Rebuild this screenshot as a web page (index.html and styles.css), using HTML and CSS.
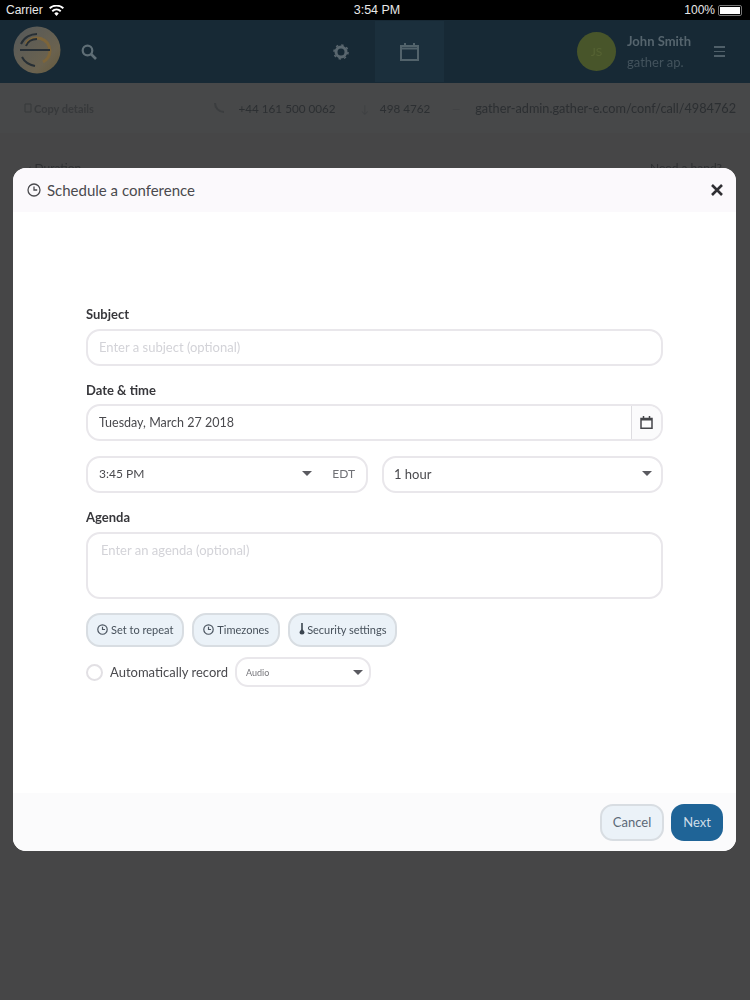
FILE: index.html
```html
<!DOCTYPE html>
<html>
<head>
	<title>Schedule a conference</title>
	<link rel="stylesheet" href="styles.css">
</head>
<body>
	<div class="status-bar">
		<div class="status-left">
			<span>Carrier</span>
			<svg width="15" height="11" viewBox="0 0 15 11"><path fill="#fff" d="M7.5 11 5.3 8.4a3.2 3.2 0 0 1 4.4 0zM3.9 6.9 2.6 5.4a7.4 7.4 0 0 1 9.8 0l-1.3 1.5a5.4 5.400 0 0 0-7.200 0zM1.300 3.900 0 2.500a11.400 11.400 0 0 1 15 0l-1.300 1.400a9.400 9.400 0 0 0-12.400 0z"/></svg>
		</div>
		<div class="status-time">3:54 PM</div>
		<div class="status-right">
			<span>100%</span>
			<div class="battery"><div class="battery-fill"></div></div>
		</div>
	</div>

	<div class="app-header">
		<div class="logo">
			<svg width="48" height="48" viewBox="0 0 48 48">
				<defs>
					<linearGradient id="disc" x1="0" y1="0" x2="1" y2="1">
						<stop offset="0" stop-color="#54585a"/>
						<stop offset="0.7" stop-color="#6a624f"/>
						<stop offset="1" stop-color="#64583a"/>
					</linearGradient>
				</defs>
				<circle cx="24" cy="24" r="23.500" fill="url(#disc)"/>
				<path fill="none" stroke="#7d653a" stroke-width="3" d="M37 25a13 13 0 0 0-24-7M37 25a13 13 0 0 1-7 11"/>
				<path fill="none" stroke="#272f35" stroke-width="2" d="M7 24h30M8 18c3-7 10-10 16-10M9 31c3 6 8 8 13 9M13 20c2-5 6-7 11-7"/>
			</svg>
		</div>
		<svg class="search-icon" width="16" height="16" viewBox="0 0 16 16"><circle cx="6.500" cy="6.500" r="4.800" fill="none" stroke="#5f6e76" stroke-width="2.200"/><path stroke="#5f6e76" stroke-width="2.600" d="m10 10 5 5"/></svg>
		<div class="header-spacer"></div>
		<svg class="gear-icon" width="16" height="16" viewBox="0 0 16 16"><circle cx="8" cy="8" r="5" fill="none" stroke="#59666e" stroke-width="3"/><circle cx="8" cy="8" r="7" fill="none" stroke="#59666e" stroke-width="1.600" stroke-dasharray="2.400 3.100"/></svg>
		<div class="calendar-tab">
			<svg width="19" height="18" viewBox="0 0 19 18"><path fill="none" stroke="#52636b" stroke-width="2" d="M1 3h17v14H1zM1 5.500h17"/><path stroke="#52636b" stroke-width="2" d="M5 0v3M14 0v3"/></svg>
		</div>
		<div class="avatar">JS</div>
		<div class="user">
			<div class="user-name">John Smith</div>
			<div class="user-org">gather ap.</div>
		</div>
		<div class="menu-icon"><span></span><span></span><span></span></div>
	</div>

	<div class="sub-bar">
		<div class="copy-details">
			<svg width="8" height="10" viewBox="0 0 8 10"><path fill="none" stroke="#37393b" d="M1 1h6v8H1z"/></svg>
			<span>Copy details</span>
		</div>
		<div class="sub-spacer"></div>
		<svg width="12" height="12" viewBox="0 0 12 12"><path fill="none" stroke="#3b3d3f" stroke-width="2" d="M2 1c0 5 4 9 9 9"/></svg>
		<span class="sub-phone">+44 161 500 0062</span>
		<span class="sub-hash">↓</span>
		<span class="sub-pin">498 4762</span>
		<span class="sub-dash">—</span>
		<span class="sub-url">gather-admin.gather-e.com/conf/call/4984762</span>
	</div>

	<div class="page-row">
		<span>‹ Duration</span>
		<span>Need a hand?</span>
	</div>

	<div class="modal">
		<div class="modal-header">
			<div class="modal-title">
				<svg class="clock" width="14" height="14" viewBox="0 0 14 14"><circle cx="7" cy="7" r="6" fill="none" stroke="#4b4b4f" stroke-width="1.300"/><path fill="none" stroke="#4b4b4f" stroke-width="1.300" d="M7 3.600V7h3.200"/></svg>
				<span>Schedule a conference</span>
			</div>
			<svg class="close" width="12" height="12" viewBox="0 0 12 12"><path stroke="#2f2f33" stroke-width="2.600" d="m1 1 10 10M11 1 1 11"/></svg>
		</div>

		<div class="modal-body">
			<div class="label">Subject</div>
			<div class="field field-subject placeholder">Enter a subject (optional)</div>

			<div class="label label-date">Date &amp; time</div>
			<div class="date-group">
				<div class="date-value">Tuesday, March 27 2018</div>
				<div class="date-button">
					<svg width="13" height="13" viewBox="0 0 13 13"><path fill="none" stroke="#45464a" stroke-width="1.500" d="M1 2.500h11v9.700H1z"/><path stroke="#45464a" stroke-width="2" d="M1 3.500h11"/><path stroke="#45464a" stroke-width="1.500" d="M3.500 0v2.500M9.500 0v2.500"/></svg>
				</div>
			</div>

			<div class="time-row">
				<div class="field select-time">
					<span class="grow">3:45 PM</span>
					<span class="caret"></span>
					<span class="zone">EDT</span>
				</div>
				<div class="field select-duration">
					<span class="grow">1 hour</span>
					<span class="caret"></span>
				</div>
			</div>

			<div class="label">Agenda</div>
			<div class="field-agenda placeholder">Enter an agenda (optional)</div>

			<div class="options">
				<div class="pill">
					<svg width="11" height="11" viewBox="0 0 14 14"><circle cx="7" cy="7" r="6" fill="none" stroke="#4b5560" stroke-width="1.500"/><path fill="none" stroke="#4b5560" stroke-width="1.500" d="M7 3.600V7h3.200"/></svg>
					<span>Set to repeat</span>
				</div>
				<div class="pill">
					<svg width="11" height="11" viewBox="0 0 14 14"><circle cx="7" cy="7" r="6" fill="none" stroke="#4b5560" stroke-width="1.500"/><path fill="none" stroke="#4b5560" stroke-width="1.500" d="M7 3.600V7h3.200"/></svg>
					<span>Timezones</span>
				</div>
				<div class="pill pill-security">
					<svg width="6" height="12" viewBox="0 0 6 12"><path fill="#3c4650" d="M2.200 0h1.600v6.500L5.500 9a2.500 2.500 0 1 1-5 0l1.700-2.500z"/></svg>
					<span>Security settings</span>
				</div>
			</div>

			<div class="record-row">
				<span class="radio"></span>
				<span class="record-label">Automatically record</span>
				<div class="record-select">
					<span class="grow">Audio</span>
					<span class="caret"></span>
				</div>
			</div>
		</div>

		<div class="modal-footer">
			<div class="btn btn-cancel">Cancel</div>
			<div class="btn btn-next">Next</div>
		</div>
	</div>
</body>
</html>
```

FILE: styles.css
```css
* {
	box-sizing: border-box;
}

body {
	margin: 0;
	height: 1000px;
	overflow: hidden;
	background-color: #464647;
	font-family: Lato, "Noto Sans", sans-serif;
	color: #4a4a4e;
}

.status-bar {
	display: flex;
	align-items: center;
	height: 20px;
	padding: 0 6px;
	background-color: #000;
	color: #e8e8e8;
	font-family: "Liberation Sans", Arial, sans-serif;
	font-size: 12px;
}

.status-left {
	display: flex;
	align-items: center;
	gap: 6px;
	width: 308px;
}

.status-time {
	width: 126px;
	text-align: center;
	font-size: 12.500px;
}

.status-right {
	display: flex;
	justify-content: flex-end;
	align-items: center;
	gap: 3px;
	flex: 1;
	padding-right: 2px;
}

.battery {
	width: 24px;
	height: 11px;
	padding: 1px;
	border: 1px solid #777;
	border-radius: 2px;
}

.battery-fill {
	height: 100%;
	background-color: #fff;
}

.app-header {
	display: flex;
	align-items: center;
	height: 63px;
	padding-left: 13px;
	background-color: #172935;
	filter: blur(0.6px);
}

.search-icon {
	margin-left: 20px;
}

.header-spacer {
	flex: 1;
}

.gear-icon {
	margin-right: 26px;
}

.calendar-tab {
	display: flex;
	align-items: center;
	justify-content: center;
	width: 69px;
	height: 61px;
	margin-right: 133px;
	background-color: #1b2f3c;
}

.avatar {
	display: flex;
	align-items: center;
	justify-content: center;
	width: 39px;
	height: 39px;
	border-radius: 50%;
	background-color: #48552a;
	color: #566333;
	font-size: 12px;
}

.user {
	margin-left: 11px;
	width: 87px;
}

.user-name {
	color: #56656e;
	font-size: 13px;
	font-weight: bold;
	line-height: 21px;
}

.user-org {
	color: #43535d;
	font-size: 13px;
	line-height: 21px;
}

.menu-icon {
	display: flex;
	flex-direction: column;
	gap: 3px;
	width: 11px;
	margin-right: 25px;
}

.menu-icon span {
	height: 1.500px;
	background-color: #4f5f69;
}

.sub-bar {
	display: flex;
	align-items: center;
	height: 50px;
	padding: 0 14px 0 24px;
	background-color: #474849;
	color: #2c2f32;
	font-size: 12px;
	filter: blur(0.7px);
}

.copy-details {
	display: flex;
	align-items: center;
	gap: 2px;
	font-size: 11px;
	font-weight: bold;
	color: #37393b;
}

.sub-spacer {
	flex: 1;
}

.sub-phone {
	margin-left: 13px;
	font-size: 11.700px;
}

.sub-hash {
	margin-left: 25px;
	font-size: 11px;
	color: #3f4143;
}

.sub-pin {
	margin-left: 11px;
	font-size: 11.700px;
}

.sub-dash {
	margin: 0 15px 0 22px;
	color: #3f4042;
	font-size: 10px;
}

.sub-url {
	font-size: 12.700px;
}

.page-row {
	display: flex;
	justify-content: space-between;
	padding: 27px 28px 0;
	color: #2e3032;
	font-size: 12px;
	filter: blur(0.7px);
}

.modal {
	position: absolute;
	left: 13px;
	top: 168px;
	display: flex;
	flex-direction: column;
	width: 723px;
	height: 683px;
	border-radius: 13px;
	overflow: hidden;
	background-color: #fff;
}

.modal-header {
	display: flex;
	align-items: center;
	justify-content: space-between;
	height: 44px;
	padding: 0 13px 0 14px;
	background-color: #fbf9fc;
}

.modal-title {
	display: flex;
	align-items: center;
	gap: 6px;
	font-size: 15px;
}

.modal-body {
	flex: 1;
	padding: 94px 73px 0;
	filter: blur(0.3px);
}

.label {
	height: 23px;
	color: #37373b;
	font-size: 13px;
	font-weight: bold;
	line-height: 16px;
}

.label-date {
	height: 22px;
}

.field {
	display: flex;
	align-items: center;
	height: 37px;
	padding: 0 11px 2px;
	border: 2px solid #e9e7eb;
	border-radius: 14px;
	background-color: #fff;
	font-size: 13px;
}

.field-subject {
	margin-bottom: 16px;
}

.placeholder {
	color: #d3d3d8;
}

.date-group {
	display: flex;
	height: 37px;
	margin-bottom: 15px;
	border: 2px solid #e9e7eb;
	border-radius: 14px;
	font-size: 12.500px;
}

.date-value {
	display: flex;
	align-items: center;
	flex: 1;
	padding-left: 11px;
}

.date-button {
	display: flex;
	align-items: center;
	justify-content: center;
	width: 30px;
	border-left: 1px solid #dedde1;
	border-radius: 0 12px 12px 0;
	background-color: #fbfbfc;
}

.time-row {
	display: grid;
	grid-template-columns: 282px 1fr;
	gap: 14px;
	margin-bottom: 16px;
}

.grow {
	flex: 1;
}

.caret {
	width: 0;
	height: 0;
	border-left: 5.500px solid transparent;
	border-right: 5.500px solid transparent;
	border-top: 5px solid #5a5a60;
}

.select-time {
	font-size: 12px;
}

.select-time .caret {
	margin-right: 20px;
}

.zone {
	color: #707176;
}

.select-duration {
	padding: 0 9px 2px 10px;
}

.field-agenda {
	height: 67px;
	margin-bottom: 14px;
	padding: 7px 13px;
	border: 2px solid #e9e7eb;
	border-radius: 14px;
	font-size: 13px;
	line-height: 18px;
}

.options {
	display: flex;
	gap: 8px;
	margin-bottom: 10px;
}

.pill {
	display: flex;
	align-items: center;
	gap: 3px;
	height: 34px;
	padding: 0 9px 2px;
	border: 2px solid #d8dde2;
	border-radius: 14px;
	background-color: #ebf2f8;
	color: #47515b;
	font-size: 11px;
}

.pill-security {
	gap: 2px;
}

.record-row {
	display: flex;
	align-items: center;
	height: 30px;
	font-size: 13px;
}

.radio {
	width: 17px;
	height: 17px;
	border: 2px solid #e2e0e4;
	border-radius: 50%;
}

.record-label {
	margin: 0 7px;
}

.record-select {
	display: flex;
	align-items: center;
	width: 136px;
	height: 30px;
	padding: 0 6px 0 9px;
	border: 2px solid #e9e7eb;
	border-radius: 13px;
	color: #77777c;
	font-size: 9px;
}

.modal-footer {
	display: flex;
	justify-content: flex-end;
	gap: 7px;
	height: 58px;
	padding: 11px 13px 0 0;
	background-color: #fbfbfc;
}

.btn {
	display: flex;
	align-items: center;
	justify-content: center;
	height: 37px;
	padding-bottom: 2px;
	border-radius: 13px;
	font-size: 13px;
}

.btn-cancel {
	width: 64px;
	border: 2px solid #d8dde2;
	background-color: #ebf2f8;
	color: #5b6977;
}

.btn-next {
	width: 52px;
	background-color: #1f6497;
	color: #cfdde8;
}
```
